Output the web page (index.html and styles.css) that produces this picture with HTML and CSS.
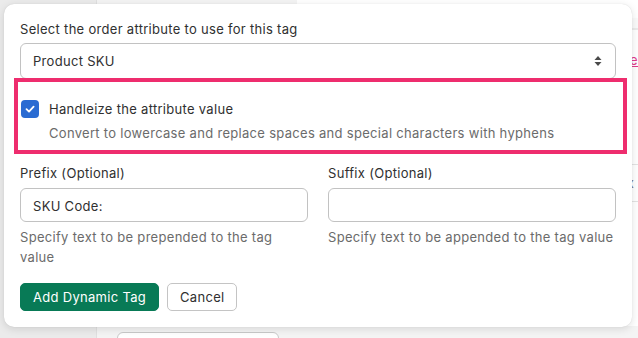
FILE: index.html
```html
<!DOCTYPE html>
<html lang="en">
<head>
    <meta charset="UTF-8">
    <title>Dynamic Tag</title>
    <link rel="stylesheet" href="styles.css">
</head>
<body>
    <!-- Page behind the popover -->
    <div class="page">
        <div class="sidebar"></div>
        <div class="main">
            <div class="panel">
                <div class="panel-head"></div>
                <div class="panel-link">le</div>
                <div class="panel-row">x</div>
            </div>
            <div class="ghost-input"></div>
        </div>
    </div>

    <!-- Popover -->
    <div class="popover">
        <label class="field-label">Select the order attribute to use for this tag</label>
        <div class="select">
            <span>Product SKU</span>
            <svg width="8" height="12" viewBox="0 0 8 12"><path d="M4 1 7.5 5h-7zM4 11 .5 7h7z" fill="#4a4a4a"/></svg>
        </div>

        <div class="check-row">
            <span class="checkbox">
                <svg width="12" height="12" viewBox="0 0 12 12"><path d="M2.5 6.2 5 8.6 9.6 3.6" fill="none" stroke="#fff" stroke-width="1.8" stroke-linecap="round" stroke-linejoin="round"/></svg>
            </span>
            <div>
                <div class="check-label">Handleize the attribute value</div>
                <div class="help check-help">Convert to lowercase and replace spaces and special characters with hyphens</div>
            </div>
        </div>

        <div class="columns">
            <div class="field">
                <label class="field-label">Prefix (Optional)</label>
                <div class="input">SKU Code:</div>
                <div class="help">Specify text to be prepended to the tag value</div>
            </div>
            <div class="field">
                <label class="field-label">Suffix (Optional)</label>
                <div class="input"></div>
                <div class="help">Specify text to be appended to the tag value</div>
            </div>
        </div>

        <div class="actions">
            <button class="btn btn-primary">Add Dynamic Tag</button>
            <button class="btn">Cancel</button>
        </div>

        <!-- Annotation -->
        <div class="highlight"></div>
    </div>
</body>
</html>
```

FILE: styles.css
```css
/* General */
html, body {
    margin: 0;
    padding: 0;
    height: 100%;
}
body {
    font-family: Inter, "Noto Sans", sans-serif;
    font-size: 13px;
    line-height: 20px;
    letter-spacing: 0.3px;
    color: #303030;
    background-color: #f1f1f1;
    overflow: hidden;
}

/* Background page */
.page {
    display: flex;
    height: 100%;
}
.sidebar {
    width: 97px;
    background-color: #ebebeb;
    border-right: 1px solid #e0e0e0;
}
.main {
    flex: 1;
    background-color: #f4f4f4;
    display: flex;
    flex-direction: column;
}
.panel {
    height: 326px;
    flex-shrink: 0;
    box-sizing: border-box;
    padding-top: 18px;
    margin-left: 200px;
    background-color: #fff;
    color: #777;
}
.panel-head {
    height: 10px;
    border-bottom: 2px solid #ebebeb;
    background-color: #fafafa;
}
.panel-link {
    margin-top: 20px;
    padding-left: 330px;
    color: #e23a8c;
    text-decoration: underline;
}
.panel-row {
    margin-top: 94px;
    padding: 8px 0 8px 330px;
    border-top: 1px solid #e3e3e3;
    border-bottom: 1px solid #e3e3e3;
}
.ghost-input {
    width: 160px;
    height: 20px;
    flex-shrink: 0;
    margin: 6px 0 0 20px;
    background-color: #fff;
    border: 1px solid #c9c9c9;
    border-radius: 6px;
}

/* Popover card */
.popover {
    position: absolute;
    top: 4px;
    left: 4px;
    width: 596px;
    padding: 15px 16px 16px 16px;
    background-color: #fff;
    border-radius: 10px;
    box-shadow: 0 2px 8px rgba(0, 0, 0, 0.12), 0 0 1px rgba(0, 0, 0, 0.15);
}
.field-label {
    display: block;
    margin-bottom: 4px;
}
.select {
    height: 34px;
    display: flex;
    align-items: center;
    justify-content: space-between;
    padding: 0 12px;
    border: 1px solid #c2c2c2;
    border-radius: 6px;
}
.select svg {
    margin-right: 1px;
}

/* Checkbox */
.check-row {
    display: flex;
    gap: 10px;
    margin-top: 20px;
    padding-left: 1px;
}
.checkbox {
    width: 18px;
    height: 18px;
    margin-top: 1px;
    flex-shrink: 0;
    background-color: #2a6bd2;
    border-radius: 4px;
    display: flex;
    align-items: center;
    justify-content: center;
}
.check-help {
    margin-top: 4px;
}
.help {
    color: #6b6b6b;
}

/* Prefix / suffix */
.columns {
    display: grid;
    grid-template-columns: 1fr 1fr;
    gap: 20px;
    margin-top: 20px;
}
.field .field-label {
    margin-bottom: 5px;
}
.input {
    height: 34px;
    box-sizing: border-box;
    padding: 7px 12px;
    border: 1px solid #c2c2c2;
    border-radius: 6px;
    margin-bottom: 5px;
}

/* Buttons */
.actions {
    display: flex;
    gap: 8px;
    margin-top: 16px;
}
.btn {
    height: 28px;
    padding: 0 12px;
    font-family: inherit;
    font-size: 13px;
    letter-spacing: inherit;
    color: #303030;
    background-color: #fff;
    border: 1px solid #c4c4c4;
    border-radius: 5px;
}
.btn-primary {
    color: #fff;
    background-color: #087a56;
    border-color: #087a56;
}

/* Pink annotation box */
.highlight {
    position: absolute;
    top: 74px;
    left: 10px;
    width: 605px;
    height: 68px;
    border: 4px solid #ee2d6e;
}
```
